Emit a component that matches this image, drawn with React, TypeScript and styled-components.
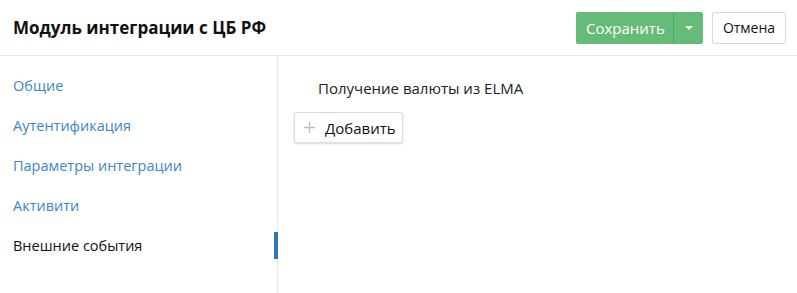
import React from "react";
import styled, { createGlobalStyle } from "styled-components";

const Global = createGlobalStyle`
  html, body { margin: 0; padding: 0; background: #fff; }
  body { font-family: "Open Sans", "Noto Sans", sans-serif; font-size: 14px; color: #222; }
`;

const Page = styled.div`
  width: 797px;
  height: 293px;
  display: flex;
  flex-direction: column;
  overflow: hidden;
`;

const Header = styled.header`
  height: 55px;
  flex: none;
  display: flex;
  align-items: center;
  justify-content: space-between;
  padding: 0 11px 0 13px;
  border-bottom: 1px solid #e6e6e6;
`;

const Title = styled.h1`
  margin: 0;
  font-size: 17px;
  font-weight: 700;
  color: #111;
`;

const Actions = styled.div`
  display: flex;
  align-items: center;
  gap: 9px;
`;

const SplitButton = styled.div`
  display: flex;
  height: 32px;
  border-radius: 2px;
  overflow: hidden;
  background: #67bb79;
`;

const PrimaryButton = styled.button`
  font: inherit;
  font-size: 15px;
  color: #fff;
  background: transparent;
  border: none;
  padding: 0 9px 0 10px;
  width: 97px;
  cursor: pointer;
`;

const CaretButton = styled.button`
  width: 30px;
  border: none;
  border-left: 1px solid #57a468;
  background: transparent;
  display: flex;
  align-items: center;
  justify-content: center;
  padding: 0;
  cursor: pointer;
`;

const Caret = styled.span`
  width: 0;
  height: 0;
  border-left: 4px solid transparent;
  border-right: 4px solid transparent;
  border-top: 4px solid #fff;
`;

const SecondaryButton = styled.button`
  font: inherit;
  font-size: 14px;
  color: #111;
  background: #fff;
  border: 1px solid #d9d9d9;
  border-radius: 2px;
  height: 32px;
  width: 74px;
  padding: 0;
  cursor: pointer;
`;

const Body = styled.div`
  flex: 1;
  display: flex;
`;

const Sidebar = styled.nav`
  width: 277px;
  flex: none;
  border-right: 1px solid #e6e6e6;
  padding-top: 9px;
  display: flex;
  flex-direction: column;
`;

const NavItem = styled.div<{ $active?: boolean }>`
  position: relative;
  height: 40px;
  display: flex;
  align-items: center;
  padding-left: 13px;
  font-size: 14.5px;
  color: ${(p) => (p.$active ? "#111" : "#3d85c6")};
  cursor: pointer;
`;

const Indicator = styled.span`
  position: absolute;
  right: -1px;
  top: 7px;
  width: 4px;
  height: 27px;
  background: #2f77b8;
`;

const Content = styled.main`
  flex: 1;
  padding: 20px 16px 0 16px;
  display: flex;
  flex-direction: column;
  align-items: flex-start;
`;

const SectionLabel = styled.div`
  font-size: 15px;
  color: #222;
  padding-left: 24px;
  height: 24px;
  line-height: 24px;
  margin-bottom: 12px;
`;

const AddButton = styled.button`
  font: inherit;
  font-size: 15px;
  color: #111;
  background: #fff;
  border: 1px solid #dcdcdc;
  border-radius: 2px;
  box-shadow: 0 1px 2px rgba(0, 0, 0, 0.15);
  height: 31px;
  width: 109px;
  display: flex;
  align-items: center;
  gap: 10px;
  padding: 0 0 0 9px;
  cursor: pointer;
`;

const items = ["Общие", "Аутентификация", "Параметры интеграции", "Активити", "Внешние события"];

export default function App() {
  return (
    <Page>
      <Global />
      <Header>
        <Title>Модуль интеграции с ЦБ РФ</Title>
        <Actions>
          <SplitButton>
            <PrimaryButton>Сохранить</PrimaryButton>
            <CaretButton>
              <Caret />
            </CaretButton>
          </SplitButton>
          <SecondaryButton>Отмена</SecondaryButton>
        </Actions>
      </Header>
      <Body>
        <Sidebar>
          {items.map((t, i) => (
            <NavItem key={t} $active={i === items.length - 1}>
              {t}
              {i === items.length - 1 && <Indicator />}
            </NavItem>
          ))}
        </Sidebar>
        <Content>
          <SectionLabel>Получение валюты из ELMA</SectionLabel>
          <AddButton>
            <svg width="11" height="11" viewBox="0 0 11 11">
              <path d="M5.5 0v11M0 5.5h11" stroke="#bdbdbd" strokeWidth="1.3" fill="none" />
            </svg>
            Добавить
          </AddButton>
        </Content>
      </Body>
    </Page>
  );
}
